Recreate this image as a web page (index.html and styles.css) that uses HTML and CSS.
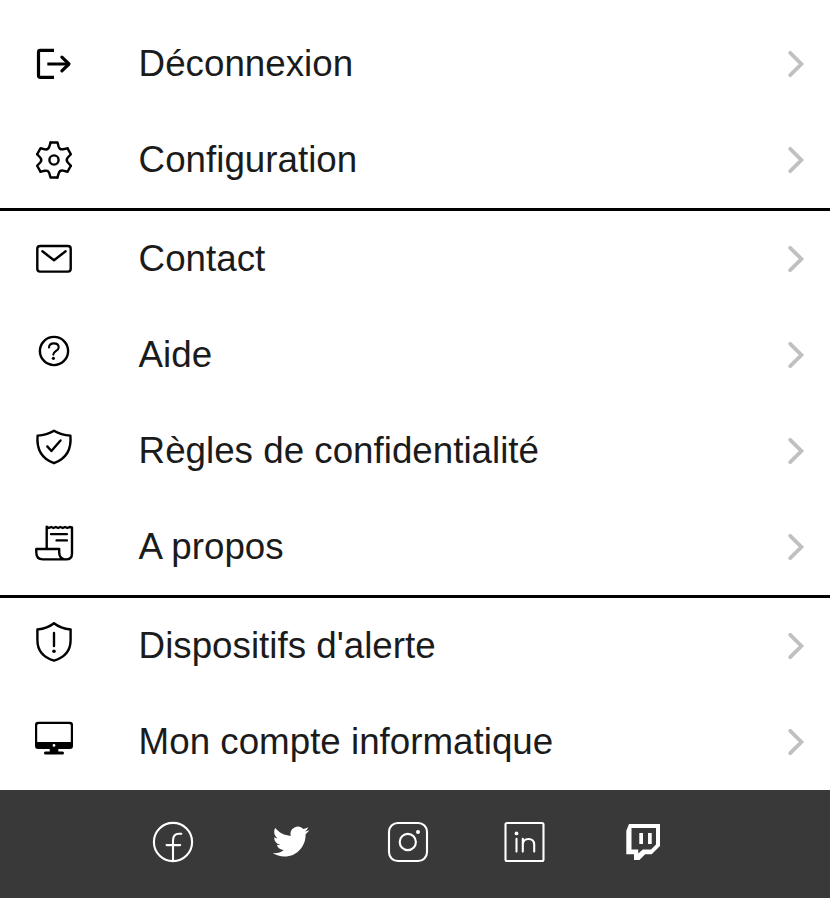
FILE: index.html
```html
<!DOCTYPE html>
<html lang="fr">
<head>
<meta charset="utf-8">
<title>Menu</title>
<link rel="stylesheet" href="styles.css">
</head>
<body>
<svg class="defs" aria-hidden="true">
  <symbol id="chevron" viewBox="0 0 20 30"><path d="M4.2 3.8 15.4 15 4.2 26.2"/></symbol>
  <path id="tooth" d="M20.5 6.5H27.5L28.7 10.8Q29.8 13.95 33.03 13.24L37.4 12.3"/>
</svg>
<nav class="menu">
  <section class="group">
    <a class="row">
      <svg class="icon bold" viewBox="0 0 48 48"><path d="M24 10.4H10.3Q8.5 10.4 8.5 12.2V35.6Q8.5 37.4 10.3 37.4H24M17.3 24H38.5"/><path d="M31.9 17.2 39 24 31.9 30.8" stroke-linecap="round"/></svg>
      <span class="label">Déconnexion</span>
      <svg class="chevron"><use href="#chevron"/></svg>
    </a>
    <a class="row">
      <svg class="icon" viewBox="0 0 48 48"><use href="#tooth"/><use href="#tooth" transform="rotate(60 24 24)"/><use href="#tooth" transform="rotate(120 24 24)"/><use href="#tooth" transform="rotate(180 24 24)"/><use href="#tooth" transform="rotate(240 24 24)"/><use href="#tooth" transform="rotate(300 24 24)"/><circle cx="24" cy="24" r="4.6"/></svg>
      <span class="label">Configuration</span>
      <svg class="chevron"><use href="#chevron"/></svg>
    </a>
  </section>
  <section class="group">
    <a class="row">
      <svg class="icon" viewBox="0 0 48 48"><rect x="7.3" y="11" width="33.4" height="25.6" rx="2.8"/><path d="M12.4 16.3 24 25.2 35.6 16.3"/></svg>
      <span class="label">Contact</span>
      <svg class="chevron"><use href="#chevron"/></svg>
    </a>
    <a class="row">
      <svg class="icon" viewBox="0 0 48 48"><circle cx="24" cy="20" r="14.1"/><path class="thin" d="M19 16.4C19 13.8 21 12.4 23.8 12.4S28.7 14 28.7 16.5C28.7 19.8 23.3 20 23.3 23.6"/><circle class="dot" cx="23.4" cy="27.3" r="1.6"/></svg>
      <span class="label">Aide</span>
      <svg class="chevron"><use href="#chevron"/></svg>
    </a>
    <a class="row">
      <svg class="icon" viewBox="0 0 48 48"><path d="M24 3.8C19.5 6.5 14 8.2 7.6 8.6C6.4 21.5 11.5 31.5 24 36.2C36.5 31.5 41.6 21.5 40.4 8.6C34 8.2 28.5 6.5 24 3.8Z"/><path d="M17.3 19.4 21.4 24 30.5 13.5"/></svg>
      <span class="label">Règles de confidentialité</span>
      <svg class="chevron"><use href="#chevron"/></svg>
    </a>
    <a class="row">
      <svg class="icon" viewBox="0 0 48 48"><path d="M16.7 26V3.8L18.8 5 21.2 4 23.5 5 25.8 4 28.1 5 30.4 4 32.7 5 35 4 37.3 5 39.6 4 42 4.4V30.5Q42 36.4 36 36.4H13Q6.3 36.4 6.3 29.5V26H29.2V29.5Q29.2 35 34.5 36.4"/><path d="M21 11.1H36.9M26.6 17.4H36.9"/></svg>
      <span class="label">A propos</span>
      <svg class="chevron"><use href="#chevron"/></svg>
    </a>
  </section>
  <section class="group">
    <a class="row">
      <svg class="icon" viewBox="0 0 48 48"><path d="M24 1.2C19.5 4.8 14 6.7 7.4 7.5V18C7.4 28.5 13.5 35.5 24 38.7C34.5 35.5 40.6 28.5 40.6 18V7.5C34 6.7 28.5 4.8 24 1.2Z"/><path d="M24 11V24"/><circle class="dot" cx="24" cy="29.2" r="1.8"/></svg>
      <span class="label">Dispositifs d'alerte</span>
      <svg class="chevron"><use href="#chevron"/></svg>
    </a>
    <a class="row">
      <svg class="icon" viewBox="0 0 48 48"><path class="dot" fill-rule="evenodd" d="M8 3.7H40Q43 3.7 43 6.7V28Q43 31 40 31H28.3V33.4H32.6Q34 33.4 34 34.9T32.6 36.4H15.4Q14 36.4 14 34.9T15.4 33.4H19.7V31H8Q5 31 5 28V6.7Q5 3.7 8 3.7ZM8.8 6Q7.2 6 7.2 7.6V24H40.8V7.6Q40.8 6 39.2 6ZM24 26A1.4 1.4 0 1 0 24 28.8A1.4 1.4 0 1 0 24 26Z"/></svg>
      <span class="label">Mon compte informatique</span>
      <svg class="chevron"><use href="#chevron"/></svg>
    </a>
  </section>
</nav>
<footer class="social">
  <svg class="icon" viewBox="0 0 48 48"><circle cx="24" cy="24" r="19.1"/><path d="M24 43V22.5Q24 15.7 30 15.7H32.3M17.6 27.1H31.2"/></svg>
  <svg class="icon" viewBox="0 0 48 48"><path class="dot" transform="translate(5.7 5.3) scale(1.525)" d="M23.953 4.57a10 10 0 01-2.825.775 4.958 4.958 0 002.163-2.723c-.951.555-2.005.959-3.127 1.184a4.92 4.92 0 00-8.384 4.482C7.69 8.095 4.067 6.13 1.64 3.162a4.822 4.822 0 00-.666 2.475c0 1.71.87 3.213 2.188 4.096a4.904 4.904 0 01-2.228-.616v.06a4.923 4.923 0 003.946 4.827 4.996 4.996 0 01-2.212.085 4.936 4.936 0 004.604 3.417 9.867 9.867 0 01-6.102 2.105c-.39 0-.779-.023-1.17-.067a13.995 13.995 0 007.557 2.209c9.053 0 13.998-7.496 13.998-13.985 0-.21 0-.42-.015-.63A9.935 9.935 0 0024 4.59z"/></svg>
  <svg class="icon" viewBox="0 0 48 48"><rect x="5" y="5" width="38" height="38" rx="8.8"/><circle cx="23.8" cy="24" r="8.1"/><circle class="dot" cx="34" cy="14" r="2"/></svg>
  <svg class="icon" viewBox="0 0 48 48"><rect x="4.5" y="5" width="38" height="38" rx="1.5"/><path d="M15.5 20.8V33.6M21.8 20.8V33.6M21.8 26.5Q22 21 27.5 21T33.2 26.5V33.6"/><circle class="dot" cx="15.5" cy="15.4" r="1.9"/></svg>
  <svg class="icon" viewBox="0 0 48 48"><path class="dot" fill-rule="evenodd" d="M10 6H41V28L32.7 36.3H26.2L20.4 42H15V36.3H7.3V12.7ZM12.5 10V31.4H19.2V35.6L23.8 31.4H32L37 26.4V10ZM20.3 15H24V26H20.3ZM29 15H32.7V26H29Z"/></svg>
</footer>
</body>
</html>
```
FILE: styles.css
```css
* {
  box-sizing: border-box;
}

body {
  margin: 0;
  background: #fff;
  color: #1b1b1b;
  font-family: "Liberation Sans", Arial, sans-serif;
  font-size: 36.75px;
}

.defs {
  display: none;
}

.menu {
  padding-top: 16px;
}

.group + .group {
  border-top: 3px solid #000;
}

.row {
  display: flex;
  align-items: center;
  height: 96px;
  padding: 0 24px 0 30px;
}

.icon {
  flex: none;
  width: 48px;
  height: 48px;
  fill: none;
  stroke: #000;
  stroke-width: 2.4;
  stroke-linecap: round;
  stroke-linejoin: round;
}

.icon.bold {
  stroke-width: 3.2;
  stroke-linecap: butt;
}

.icon .thin {
  stroke-width: 2.1;
}

.icon .dot {
  fill: #000;
  stroke: none;
}

.label {
  flex: 1;
  margin-left: 60.6px;
  line-height: 48px;
  white-space: nowrap;
}

.chevron {
  flex: none;
  width: 20px;
  height: 30px;
  fill: none;
  stroke: #c0c0c0;
  stroke-width: 3.8;
  stroke-linecap: round;
  stroke-linejoin: miter;
}

.social {
  display: flex;
  gap: 69.5px;
  height: 108px;
  padding: 28px 0 0 149px;
  background: #393939;
}

.social .icon {
  stroke: #fff;
  stroke-width: 2.1;
}

.social .icon:nth-child(4) {
  margin-left: -0.5px;
  margin-right: 0.5px;
}

.social .dot {
  fill: #fff;
}
```
